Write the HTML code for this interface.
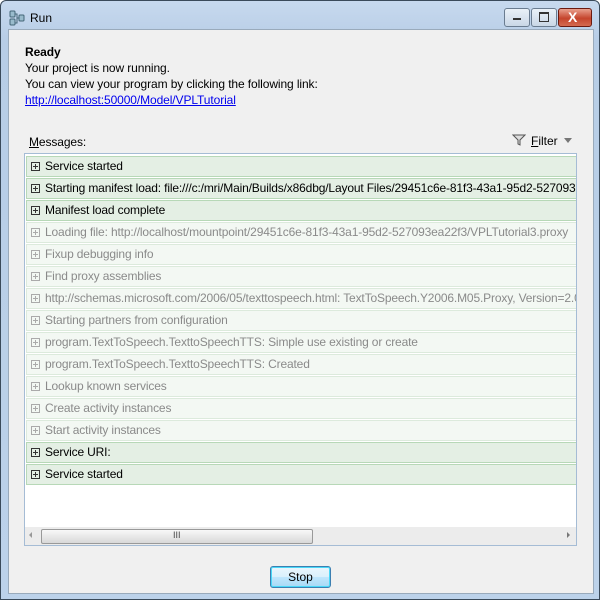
<!DOCTYPE html>
<html><head><style>
body{margin:0;width:600px;height:600px;overflow:hidden;font-family:"Liberation Sans",sans-serif;font-size:12px;}
.win{position:absolute;left:0;top:0;width:598px;height:598px;border:1px solid #3a4a5a;border-radius:6px 6px 0 0;background:linear-gradient(#c7d9ee,#b7cde6 40px,#bcd2ea);}
.client{position:absolute;left:7px;top:28px;width:584px;height:563px;background:#f0f0f0;border:1px solid #99aabb;}
.t{position:absolute;left:24px;letter-spacing:-0.1px}
.btn{position:absolute;top:7px;height:17px;border:1px solid #6a7c90;border-radius:3px;background:linear-gradient(#eaf1f8,#c9d7e6);}
.list{position:absolute;left:23px;top:152px;width:551px;height:391px;background:#fff;border:1px solid #a5bcd5;overflow:hidden;}
.row{position:absolute;left:1px;width:560px;height:19px;border:1px solid #b7d8b7;background:#e4efe4;color:#000;line-height:19px;letter-spacing:-0.15px}
.row.f{border-color:#dceadc;background:#f3f8f3;color:#8a8a8a;}
.row span{position:absolute;left:18px;white-space:nowrap;}
.pl{position:absolute;left:4px;top:5px;width:7px;height:7px;border:1px solid #333;}
.f .pl{border-color:#aaa}
.pl:before{content:"";position:absolute;left:1px;top:3px;width:5px;height:1px;background:#333}
.pl:after{content:"";position:absolute;left:3px;top:1px;width:1px;height:5px;background:#333}
.f .pl:before,.f .pl:after{background:#aaa}
</style></head><body>
<div class="win">
<svg style="position:absolute;left:8px;top:9px" width="16" height="16"><rect x="1" y="1" width="5" height="6" rx="1" fill="#9bc" stroke="#467"/><rect x="1" y="9" width="5" height="6" rx="1" fill="#9bc" stroke="#467"/><rect x="10" y="5" width="5" height="6" rx="1" fill="#9bc" stroke="#467"/><path d="M6 4H8V13H6M8 8H10" stroke="#467" fill="none"/></svg>
<div style="position:absolute;left:29px;top:10px;font-size:12px">Run</div>
<div class="btn" style="left:503px;width:24px"><div style="position:absolute;left:8px;top:9px;width:8px;height:2px;background:#333"></div></div>
<div class="btn" style="left:530px;width:24px"><div style="position:absolute;left:7px;top:3px;width:8px;height:7px;border:1px solid #333;border-top-width:2px"></div></div>
<div class="btn" style="left:557px;width:32px;border-color:#6b1a10;background:linear-gradient(#e9a08e,#c5452d 55%,#d46a50)"><div style="position:absolute;left:9px;top:0;color:#fff;font-weight:bold;font-size:14px;line-height:16px">X</div></div>
<div class="client">
</div>
<div class="t" style="top:44px;font-weight:bold">Ready</div>
<div class="t" style="top:60px">Your project is now running.</div>
<div class="t" style="top:76px">You can view your program by clicking the following link:</div>
<div class="t" style="top:92px;color:#00e;text-decoration:underline">http://localhost:50000/Model/VPLTutorial</div>
<div class="t" style="left:28px;top:134px"><u>M</u>essages:</div>
<svg style="position:absolute;left:511px;top:133px" width="14" height="12"><path d="M1 1H13L8 6V11L6 10V6Z" fill="#ddd" stroke="#555"/></svg>
<div style="position:absolute;left:530px;top:133px"><u>F</u>ilter</div>
<div style="position:absolute;left:563px;top:137px;border:4px solid transparent;border-top:5px solid #777"></div>
<div class="list">
<div class="row" style="top:2px"><i class="pl"></i><span>Service started</span></div>
<div class="row" style="top:24px"><i class="pl"></i><span>Starting manifest load: file:///c:/mri/Main/Builds/x86dbg/Layout Files/29451c6e-81f3-43a1-95d2-527093ea22f3</span></div>
<div class="row" style="top:46px"><i class="pl"></i><span>Manifest load complete</span></div>
<div class="row f" style="top:68px"><i class="pl"></i><span>Loading file: http://localhost/mountpoint/29451c6e-81f3-43a1-95d2-527093ea22f3/VPLTutorial3.proxy</span></div>
<div class="row f" style="top:90px"><i class="pl"></i><span>Fixup debugging info</span></div>
<div class="row f" style="top:112px"><i class="pl"></i><span>Find proxy assemblies</span></div>
<div class="row f" style="top:134px"><i class="pl"></i><span>http://schemas.microsoft.com/2006/05/texttospeech.html: TextToSpeech.Y2006.M05.Proxy, Version=2.0</span></div>
<div class="row f" style="top:156px"><i class="pl"></i><span>Starting partners from configuration</span></div>
<div class="row f" style="top:178px"><i class="pl"></i><span>program.TextToSpeech.TexttoSpeechTTS: Simple use existing or create</span></div>
<div class="row f" style="top:200px"><i class="pl"></i><span>program.TextToSpeech.TexttoSpeechTTS: Created</span></div>
<div class="row f" style="top:222px"><i class="pl"></i><span>Lookup known services</span></div>
<div class="row f" style="top:244px"><i class="pl"></i><span>Create activity instances</span></div>
<div class="row f" style="top:266px"><i class="pl"></i><span>Start activity instances</span></div>
<div class="row" style="top:288px"><i class="pl"></i><span>Service URI:</span></div>
<div class="row" style="top:310px"><i class="pl"></i><span>Service started</span></div>
<div style="position:absolute;left:0;top:373px;width:553px;height:18px;background:#ececec"></div>
<div style="position:absolute;left:16px;top:375px;width:270px;height:13px;border:1px solid #999;border-radius:2px;background:linear-gradient(#f8f8f8,#d8d8d8)"><div style="position:absolute;left:131px;top:0;font-size:9px;color:#444">III</div></div>
<div style="position:absolute;left:4px;top:378px;border:3px solid transparent;border-right:3px solid #999;border-left:0"></div>
<div style="position:absolute;left:542px;top:378px;border:3px solid transparent;border-left:3px solid #777;border-right:0"></div>
</div>
<div style="position:absolute;left:269px;top:565px;width:59px;height:20px;border:1px solid #3c7fb1;border-radius:3px;background:linear-gradient(#eaf6fd,#d9f0fc 50%,#bee6fd 51%,#a7d9f5);box-shadow:inset 0 0 0 1px #48d8f8;text-align:center;line-height:20px">Stop</div>
</div>
</body></html>
